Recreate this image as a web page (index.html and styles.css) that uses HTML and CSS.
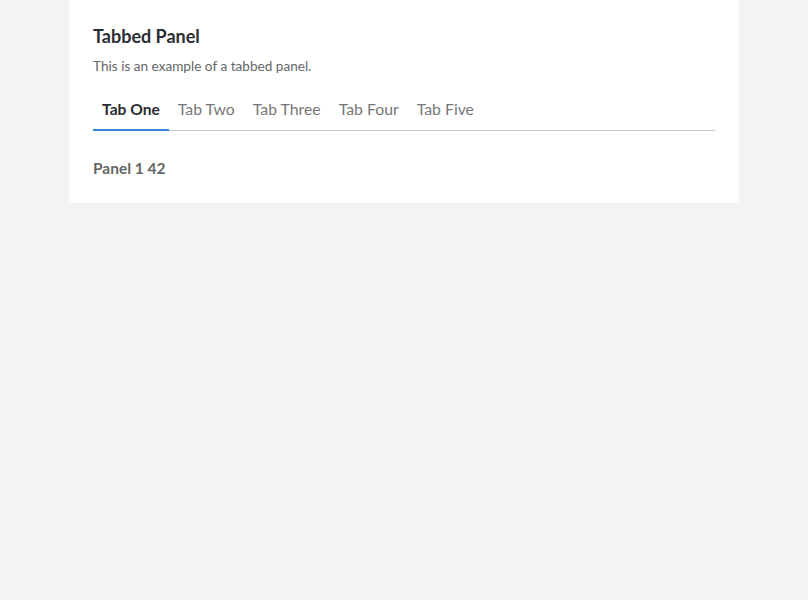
FILE: index.html
```html
<!DOCTYPE html>
<html>
<head>
<meta charset="utf-8">
<link rel="stylesheet" href="styles.css">
</head>
<body>
<div class="card">
  <h2 class="title">Tabbed Panel</h2>
  <p class="subtitle">This is an example of a tabbed panel.</p>
  <div class="tabs">
    <div class="tab active">Tab One</div>
    <div class="tab">Tab Two</div>
    <div class="tab">Tab Three</div>
    <div class="tab">Tab Four</div>
    <div class="tab">Tab Five</div>
  </div>
  <div class="panel">Panel 1 42</div>
</div>
</body>
</html>
```

FILE: styles.css
```css
html, body {
  margin: 0;
  padding: 0;
  background: #f3f3f3;
  font-family: Lato, "Liberation Sans", sans-serif;
}
.card {
  width: 670px;
  box-sizing: border-box;
  margin: 0 auto;
  background: #fff;
  padding: 24px 24px 25px 24px;
}
.title {
  margin: 0;
  font-size: 18px;
  font-weight: 700;
  color: #2b2d33;
  line-height: 24px;
}
.subtitle {
  margin: 9px 0 0;
  font-size: 13.6px;
  color: #666;
  line-height: 18px;
}
.tabs {
  display: flex;
  margin-top: 16px;
  border-bottom: 1px solid #c8c8c8;
}
.tab {
  padding: 8px 9px 10px;
  font-size: 15.8px;
  line-height: 20px;
  color: #777;
  border-bottom: 2px solid transparent;
  margin-bottom: -1px;
}
.tab.active {
  font-size: 15.6px;
  font-weight: 700;
  color: #2b2d33;
  border-bottom-color: #3a87d8;
}
.panel {
  margin-top: 27px;
  font-size: 15.5px;
  font-weight: 700;
  color: #666;
  line-height: 20px;
}
```
